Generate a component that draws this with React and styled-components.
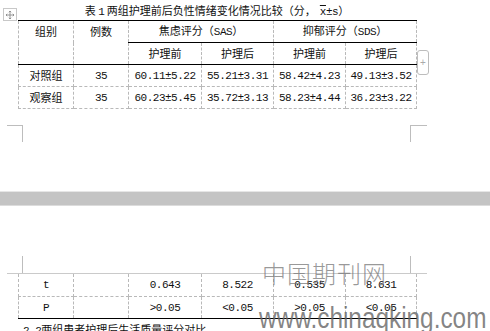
import styled, { createGlobalStyle } from 'styled-components'

const GlobalStyle = createGlobalStyle`
  html, body {
    margin: 0;
    padding: 0;
    background: #fff;
  }
  body {
    font-family: "Noto Sans CJK SC", sans-serif;
  }
`

const Page = styled.div`
  width: 490px;
  height: 331px;
  overflow: hidden;
  background: #fff;
  font-family: "Noto Sans CJK SC", sans-serif;
`

const Sheet = styled.section`
  position: relative;
  box-sizing: border-box;
  height: ${p => p.$height}px;
  padding-top: ${p => p.$pad || 0}px;
  overflow: hidden;
`

const PageGap = styled.div`
  height: 13px;
  background: #c4c4c4;
  border-top: 1px solid #e6e6e6;
  border-bottom: 1px solid #dcdcdc;
`

const Caption = styled.div`
  box-sizing: border-box;
  margin-left: 18px;
  width: 398px;
  height: 20px;
  padding-top: 3px;
  text-align: center;
  font-size: 11px;
  line-height: 14px;
  color: #111;
  white-space: nowrap;
`

const Latin = styled.span`
  font-family: "Liberation Mono", monospace;
  letter-spacing: -0.5px;
`

const Mean = styled(Latin)`
  text-decoration: overline;
  margin-left: 4px;
`

const MoveHandle = styled.div`
  position: absolute;
  left: 3px;
  top: 8px;
  width: 12px;
  height: 11px;
  border: 1px solid #c8c8c8;
  background: #fff;
  display: flex;
  align-items: center;
  justify-content: center;
`

const TableWrap = styled.div`
  position: relative;
  margin-left: 18px;
  width: 398px;
`

const Grid = styled.table`
  border-collapse: collapse;
  table-layout: fixed;
  width: 398px;
  font-size: 11px;
  color: #111;
`

const dash = '1px dashed #b9b9b9'
const rule = '1px solid #000'

const Cell = styled.td`
  box-sizing: border-box;
  height: 22px;
  padding: 0;
  text-align: center;
  vertical-align: ${p => (p.$top ? 'top' : 'middle')};
  line-height: ${p => (p.$top ? '21px' : '13px')};
  white-space: nowrap;
  border-left: ${dash};
  border-right: ${dash};
  border-top: ${p => (p.$head ? rule : p.$open ? 'none' : dash)};
  border-bottom: ${p => (p.$rule ? rule : dash)};
`

const AddColumn = styled.div`
  position: absolute;
  left: 399px;
  top: 30px;
  width: 12px;
  height: 25px;
  box-sizing: border-box;
  border: 1px solid #bdbdbd;
  border-radius: 3px;
  background: #fff;
  color: #aaa;
  font-size: 10px;
  font-family: "Liberation Sans", sans-serif;
  display: flex;
  align-items: center;
  justify-content: center;
`

const Marks = styled.div`
  display: flex;
  justify-content: space-between;
  margin: ${p => p.$mt}px 0 0 7px;
  width: 420px;
  height: ${p => (p.$line ? 17 : 17)}px;
  border-bottom: ${p => (p.$line ? '1px solid #cacaca' : 'none')};
`

const Mark = styled.div`
  box-sizing: border-box;
  width: ${p => p.$w}px;
  height: 17px;
  border-top: ${p => (p.$cap ? '1px solid #bdbdbd' : 'none')};
  border-right: ${p => (p.$side === 'right' ? '1px solid #bdbdbd' : 'none')};
  border-left: ${p => (p.$side === 'left' ? '1px solid #bdbdbd' : 'none')};
`

const Heading = styled.p`
  margin: 4px 0 0 23px;
  font-size: 11px;
  line-height: 13px;
  color: #111;
  white-space: nowrap;
`

const StampCn = styled.div`
  position: absolute;
  left: 262px;
  top: 55px;
  font-size: 24px;
  line-height: 24px;
  letter-spacing: 1px;
  font-weight: 300;
  color: rgba(120, 120, 120, 0.75);
  white-space: nowrap;
`

const StampUrl = styled.div`
  position: absolute;
  left: 259px;
  top: 98px;
  font-family: "Liberation Sans", sans-serif;
  font-size: 29px;
  line-height: 29px;
  color: rgba(105, 105, 105, 0.82);
  transform: scaleX(0.84);
  transform-origin: left top;
  white-space: nowrap;
`

const MoveIcon = () => (
  <svg width="10" height="10" viewBox="0 0 10 10" fill="none" stroke="#8a8a8a" strokeWidth="0.9">
    <path d="M5 1v8M1 5h8" />
    <path d="M3.8 2.2L5 1l1.2 1.2M3.8 7.8L5 9l1.2-1.2M2.2 3.8L1 5l1.2 1.2M7.8 3.8L9 5 7.8 6.2" />
  </svg>
)

const widths = [55, 55, 73, 72, 72, 71]

const Cols = () => (
  <colgroup>
    {widths.map((w, i) => <col key={i} style={{ width: w }} />)}
  </colgroup>
)

const groups = [
  { name: '对照组', n: '35', vals: ['60.11±5.22', '55.21±3.31', '58.42±4.23', '49.13±3.52'] },
  { name: '观察组', n: '35', vals: ['60.23±5.45', '35.72±3.13', '58.23±4.44', '36.23±3.22'] },
]

const stats = [
  { name: 't', vals: ['0.643', '8.522', '0.535', '8.631'] },
  { name: 'P', vals: ['>0.05', '<0.05', '>0.05', '<0.05'] },
]

export default function App() {
  return (
    <Page>
      <GlobalStyle />
      <Sheet $height={191}>
        <MoveHandle><MoveIcon /></MoveHandle>
        <Caption>
          表 <Latin>1</Latin> 两组护理前后负性情绪变化情况比较（分，<Mean>x</Mean><Latin>±s</Latin>）
        </Caption>
        <TableWrap>
          <Grid>
            <Cols />
            <tbody>
              <tr>
                <Cell $head $top $rule rowSpan={2}>组别</Cell>
                <Cell $head $top $rule rowSpan={2}>例数</Cell>
                <Cell $head $rule colSpan={2}>焦虑评分（<Latin>SAS</Latin>）</Cell>
                <Cell $head $rule colSpan={2}>抑郁评分（<Latin>SDS</Latin>）</Cell>
              </tr>
              <tr>
                <Cell $rule>护理前</Cell>
                <Cell $rule>护理后</Cell>
                <Cell $rule>护理前</Cell>
                <Cell $rule>护理后</Cell>
              </tr>
              {groups.map(g => (
                <tr key={g.name}>
                  <Cell>{g.name}</Cell>
                  <Cell><Latin>{g.n}</Latin></Cell>
                  {g.vals.map((v, i) => <Cell key={i}><Latin>{v}</Latin></Cell>)}
                </tr>
              ))}
            </tbody>
          </Grid>
          <AddColumn>+</AddColumn>
        </TableWrap>
        <Marks $mt={16}>
          <Mark $w={16} $cap $side="right" />
          <Mark $w={17} $cap $side="left" />
        </Marks>
      </Sheet>
      <PageGap />
      <Sheet $height={125} $pad={50}>
        <Marks $mt={0} $line>
          <Mark $w={16} $side="right" />
          <Mark $w={17} $side="left" />
        </Marks>
        <TableWrap>
          <Grid>
            <Cols />
            <tbody>
              {stats.map((s, r) => (
                <tr key={s.name}>
                  <Cell $open={r === 0} $rule={r === stats.length - 1}><Latin>{s.name}</Latin></Cell>
                  <Cell $open={r === 0} $rule={r === stats.length - 1} />
                  {s.vals.map((v, i) => (
                    <Cell key={i} $open={r === 0} $rule={r === stats.length - 1}><Latin>{v}</Latin></Cell>
                  ))}
                </tr>
              ))}
            </tbody>
          </Grid>
        </TableWrap>
        <Heading><Latin>2.2</Latin>两组患者护理后生活质量评分对比</Heading>
        <StampCn>中国期刊网</StampCn>
        <StampUrl>www.chinaqking.com</StampUrl>
      </Sheet>
    </Page>
  )
}
